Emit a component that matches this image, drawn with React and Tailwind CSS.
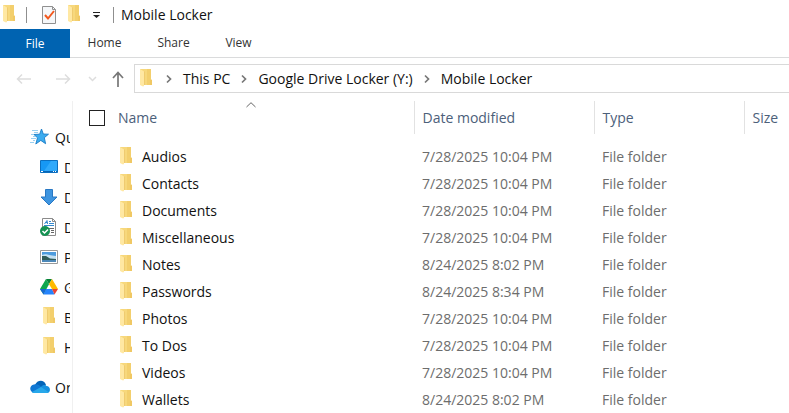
import React from 'react'
import clsx from 'clsx'

const files = [
  { name: 'Audios', modified: '7/28/2025 10:04 PM' },
  { name: 'Contacts', modified: '7/28/2025 10:04 PM' },
  { name: 'Documents', modified: '7/28/2025 10:04 PM' },
  { name: 'Miscellaneous', modified: '7/28/2025 10:04 PM' },
  { name: 'Notes', modified: '8/24/2025 8:02 PM' },
  { name: 'Passwords', modified: '8/24/2025 8:34 PM' },
  { name: 'Photos', modified: '7/28/2025 10:04 PM' },
  { name: 'To Dos', modified: '7/28/2025 10:04 PM' },
  { name: 'Videos', modified: '7/28/2025 10:04 PM' },
  { name: 'Wallets', modified: '8/24/2025 8:02 PM' },
]

const FolderIcon = ({ className }) => (
  <svg viewBox="0 0 12 20" className={clsx('h-5 w-3 shrink-0', className)} aria-hidden="true">
    <path d="M0 0h11v10.500l1 .5v5H0z" fill="#f7d87c" />
    <path d="M7 0h4v10.500l1 .5v5H7z" fill="#f3cf6d" />
    <path d="M0 0l4 2.500V17L3 17.500 0 16z" fill="#ffe8a3" />
    <path d="M4.500 2.500V16" stroke="#efcb70" />
    <path d="M10 11h2v5h-2z" fill="#f0c864" />
  </svg>
)

const StarIcon = () => (
  <svg viewBox="0 0 20 18" className="h-[18px] w-5 shrink-0" aria-hidden="true">
    <path d="M11.500 1l1.800 5 5.200.2-4.200 3.500 1.300 6-4.800-3.300-5 3.600 1.700-6.200L4 6.500l5.700-.3z" fill="#3cacef" stroke="#1a7cc6" strokeWidth=".9" />
    <path d="M2 2.500h6M4 4.500h4M1 6.500h3M3 8.500h3M1 10.500h5M3 12.500h2M0 14.500h4" stroke="#7fc4ee" strokeWidth=".8" />
  </svg>
)

const DesktopIcon = () => (
  <svg viewBox="0 0 20 18" className="h-[18px] w-5 shrink-0" aria-hidden="true">
    <path d="M1.500 2.500h17v12h-17z" fill="#1698f5" stroke="#0b6fc0" />
    <path d="M12 3h6v10H5z" fill="#2fa9fb" />
    <path d="M2 13.500h16" stroke="#0764b5" />
    <path d="M2 13.500h2M14 13.500h1M16 13.500h1" stroke="#fff" />
  </svg>
)

const DownloadIcon = () => (
  <svg viewBox="0 0 20 18" className="h-[18px] w-5 shrink-0" aria-hidden="true">
    <path d="M6.500 1.500h7V9H18l-8 8-8-8h4.500z" fill="#3e95e0" stroke="#2878c4" />
  </svg>
)

const DocumentIcon = () => (
  <svg viewBox="0 0 20 20" className="h-5 w-5 shrink-0" aria-hidden="true">
    <path d="M3.500 1.500h10l3 3v14h-13z" fill="#fff" stroke="#8b8b8b" />
    <path d="M13.500 1.500v3h3" fill="none" stroke="#8b8b8b" />
    <path d="M5.500 7L8 3.500 8.500 7M6.500 5.500h2M10 4.500h2M10 6.500h5M5 8.500h10" fill="none" stroke="#3489ce" />
    <path d="M10 11.500h5M12 13.500h3M12 15.500h3" stroke="#656565" />
    <circle cx="6" cy="14" r="5" fill="#149252" />
    <path d="M3.500 14l2 2 3.500-3.500" fill="none" stroke="#fff" strokeWidth="1.500" />
  </svg>
)

const PictureIcon = () => (
  <svg viewBox="0 0 20 18" className="h-[18px] w-5 shrink-0" aria-hidden="true">
    <path d="M1.500 2.500h17v13h-17z" fill="#fff" stroke="#999" />
    <path d="M3 4h14v10H3z" fill="#4d9bdd" />
    <path d="M3 7c4-2 6 0 14 1v4H3z" fill="#c3e0f2" />
    <path d="M3 8l4 0 4 2.500 6 .5v1H3z" fill="#315c59" />
    <path d="M3 12h14v2H3z" fill="#4c88b8" />
  </svg>
)

const DriveIcon = () => (
  <svg viewBox="0 0 20 18" className="h-[18px] w-5 shrink-0" aria-hidden="true">
    <path d="M7 1l3 5.200L4.500 16.500 1 11z" fill="#0da74f" />
    <path d="M7 1h6l-3 5.200z" fill="#088338" />
    <path d="M13 1l6 10h-6L10 6.200z" fill="#ffba00" />
    <path d="M7 11h6l2.500 5.500h-11z" fill="#2684fc" />
    <path d="M1 11h6l-2.500 5.500z" fill="#1967d2" />
    <path d="M13 11h6l-3.500 5.500z" fill="#ea4335" />
  </svg>
)

const CloudIcon = () => (
  <svg viewBox="0 0 20 14" className="h-[14px] w-5 shrink-0" aria-hidden="true">
    <path d="M5 5C7 0 14-1 16 5l-5 4z" fill="#0364b8" />
    <path d="M4 4.500c3-1 5 0 8 3L4 13C-1 12-1 5 4 4.500z" fill="#0f78d4" />
    <path d="M11 7c2-3 5-2 5.500-1C21 6 21 13 17 13l-7-4z" fill="#1490df" />
    <path d="M2 12l9-5 7.500 5c-1 1-1 1-2 1H4c-1 0-1.500 0-2-1z" fill="#28a8ea" />
  </svg>
)

const ChecklistIcon = () => (
  <svg viewBox="0 0 14 18" className="h-[18px] w-[14px]" aria-hidden="true">
    <path d="M.5.5h10l3 3v14H.5z" fill="#f5f7f9" stroke="#909090" />
    <path d="M10.500.5v3h3" fill="none" stroke="#909090" />
    <path d="M3 9l3 3.500L12 5" fill="none" stroke="#f2581d" strokeWidth="2" />
  </svg>
)

const ArrowIcon = ({ className }) => (
  <svg viewBox="0 0 16 14" className={clsx('h-[14px] w-4', className)} fill="none" stroke="currentColor" strokeWidth="1.500" aria-hidden="true">
    <path d="M15 7H1.500M6 2.500L1.500 7 6 11.500" />
  </svg>
)

const Chevron = () => (
  <svg viewBox="0 0 6 10" className="h-[10px] w-[6px] shrink-0" fill="none" stroke="#777" strokeWidth="1.700" aria-hidden="true">
    <path d="M1 1.500L4.500 5 1 8.500" />
  </svg>
)

const quickLinks = [
  { label: 'Desktop', Icon: DesktopIcon },
  { label: 'Downloads', Icon: DownloadIcon },
  { label: 'Documents', Icon: DocumentIcon },
  { label: 'Pictures', Icon: PictureIcon },
  { label: 'Google Drive', Icon: DriveIcon },
  { label: 'Backup', Icon: () => <FolderIcon className="mx-1" /> },
  { label: 'Home', Icon: () => <FolderIcon className="mx-1" /> },
]

const TitleBar = () => (
  <header className="flex h-[29px] items-center pl-[3px]">
    <FolderIcon />
    <span className="ml-[11px] h-4 w-px bg-[#8f8f8f]" />
    <button type="button" aria-label="Properties" className="ml-[15px]">
      <ChecklistIcon />
    </button>
    <button type="button" aria-label="New folder" className="ml-3">
      <FolderIcon />
    </button>
    <button type="button" aria-label="Customize toolbar" className="ml-[13px]">
      <svg viewBox="0 0 7 6" className="h-[6px] w-[7px]" aria-hidden="true">
        <path d="M0 0h7v1H0zM0 3h7L3.500 6z" fill="#222" />
      </svg>
    </button>
    <span className="ml-[13px] h-4 w-px bg-[#8f8f8f]" />
    <h1 className="ml-[7px] text-[14px] text-[#111]">Mobile Locker</h1>
  </header>
)

const Ribbon = () => (
  <nav className="flex h-[29px] border-b border-[#dadbdc] text-[12px] text-[#333]">
    <button type="button" className="-mb-px w-[70px] bg-[#0063b1] text-white">File</button>
    <button type="button" className="w-[69px]">Home</button>
    <button type="button" className="w-[69px]">Share</button>
    <button type="button" className="w-[61px]">View</button>
  </nav>
)

const AddressBar = () => (
  <div className="mb-[2px] flex h-[41px] items-center pl-4 text-[#ddd]">
    <button type="button" aria-label="Back">
      <ArrowIcon />
    </button>
    <button type="button" aria-label="Forward" className="ml-[23px]">
      <ArrowIcon className="rotate-180" />
    </button>
    <button type="button" aria-label="Recent locations" className="ml-[17px]">
      <svg viewBox="0 0 9 6" className="h-[6px] w-[9px]" fill="none" stroke="currentColor" strokeWidth="1.500" aria-hidden="true">
        <path d="M1 1l3.500 3.500L8 1" />
      </svg>
    </button>
    <button type="button" aria-label="Up" className="ml-[15px] text-[#777]">
      <svg viewBox="0 0 12 16" className="h-4 w-3" fill="none" stroke="currentColor" strokeWidth="1.700" aria-hidden="true">
        <path d="M6 16V1.500M1 7l5-5.500L11 7" />
      </svg>
    </button>
    <div className="ml-[10px] flex h-[29px] flex-1 items-center border border-r-0 border-[#d9d9d9] pl-[5px] text-[14px] whitespace-nowrap text-[#111]">
      <FolderIcon />
      <div className="ml-[14px] flex items-center gap-[11px]">
        <Chevron />
        <button type="button">This PC</button>
        <Chevron />
        <button type="button">Google Drive Locker (Y:)</button>
        <Chevron />
        <button type="button">Mobile Locker</button>
      </div>
    </div>
  </div>
)

const Sidebar = () => (
  <aside className="w-[73px] shrink-0 border-r border-[#f0f0f0] pt-[21px] pr-[2px] text-[14px] whitespace-nowrap text-[#111]">
    <div className="overflow-hidden">
      <a href="#quick" className="flex h-[30px] items-center gap-[5px] pl-[30px]">
        <StarIcon />
        Quick access
      </a>
      {quickLinks.map(({ label, Icon }) => (
        <a key={label} href="#folder" className="flex h-[30px] items-center gap-[5px] pl-[39px]">
          <Icon />
          {label}
        </a>
      ))}
      <a href="#onedrive" className="mt-[10px] flex h-[30px] items-center gap-[5px] pl-[30px]">
        <CloudIcon />
        OneDrive
      </a>
    </div>
  </aside>
)

const FileTable = () => (
  <table className="w-full min-w-0 flex-1 table-fixed border-collapse self-start text-left text-[14px] whitespace-nowrap text-[#6d6d6d]">
    <colgroup>
      <col className="w-[341px]" />
      <col className="w-[180px]" />
      <col className="w-[150px]" />
      <col />
    </colgroup>
    <thead className="text-[#4c607a]">
      <tr className="h-[33px]">
        <th className="p-0 pl-4 font-normal">
          <div className="relative flex h-[33px] items-center">
            <input type="checkbox" aria-label="Select all" className="h-4 w-4 appearance-none border border-[#222] bg-white" />
            <span className="ml-[13px]">Name</span>
            <svg viewBox="0 0 10 6" className="absolute top-px left-1/2 h-[6px] w-[10px] -translate-x-1/2" fill="none" stroke="#666" aria-hidden="true">
              <path d="M.5 5L5 .7 9.500 5" />
            </svg>
          </div>
        </th>
        <th className="border-l border-[#e2e2e2] p-0 pl-2 font-normal">Date modified</th>
        <th className="border-l border-[#e2e2e2] p-0 pl-2 font-normal">Type</th>
        <th className="border-l border-[#e2e2e2] p-0 pl-2 font-normal">Size</th>
      </tr>
    </thead>
    <tbody className="before:block before:h-[9px]">
      {files.map((file) => (
        <tr key={file.name} className="h-[27px]">
          <td className="p-0 pl-[47px]">
            <div className="flex items-center gap-[10px] text-[#111]">
              <FolderIcon />
              {file.name}
            </div>
          </td>
          <td className="p-0 pl-2">{file.modified}</td>
          <td className="p-0 pl-2">File folder</td>
          <td />
        </tr>
      ))}
    </tbody>
  </table>
)

const App = () => {
  return (
    <div className="flex h-screen flex-col overflow-hidden bg-white font-['Open_Sans',sans-serif]">
      <TitleBar />
      <Ribbon />
      <AddressBar />
      <main className="flex min-h-0 flex-1">
        <Sidebar />
        <FileTable />
      </main>
    </div>
  )
}

export default App
